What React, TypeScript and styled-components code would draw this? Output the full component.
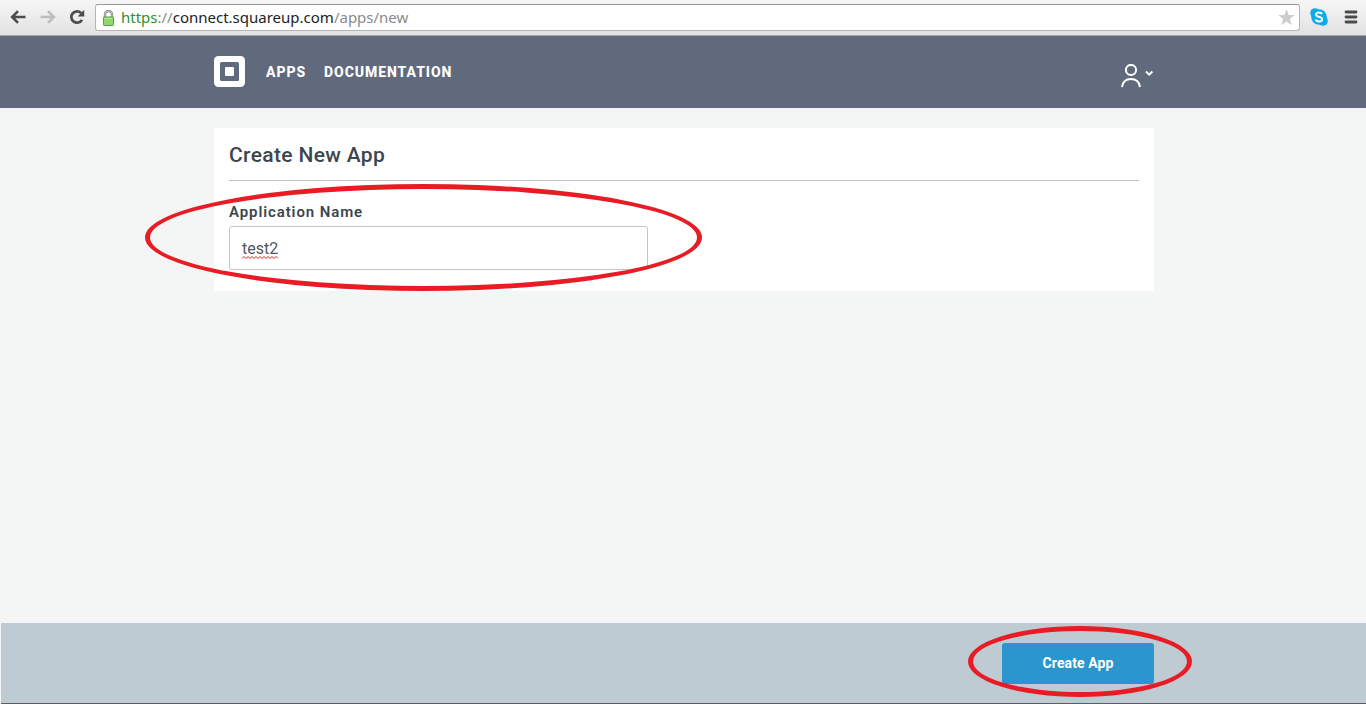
import React from 'react';
import styled, { createGlobalStyle } from 'styled-components';

const GlobalStyle = createGlobalStyle`
  *, *::before, *::after { box-sizing: border-box; }
  body { margin: 0; background: #f4f6f5; overflow: hidden; }
`;

const Page = styled.div`
  position: relative;
  display: flex;
  flex-direction: column;
  height: 704px;
  background: #f4f6f5;
  color: #3d454d;
  font-family: Roboto, "Liberation Sans", sans-serif;
`;

const BrowserBar = styled.div`
  display: flex;
  align-items: flex-start;
  height: 36px;
  padding: 4px 8px 0 10px;
  background: linear-gradient(#f6f6f6, #e2e2e2);
  border-bottom: 1px solid #a3a3a3;
`;

const BrowserButton = styled.div<{ $gap: number }>`
  display: flex;
  align-items: center;
  height: 26px;
  margin-right: ${({ $gap }) => $gap}px;
`;

const AddressBar = styled.div`
  display: flex;
  flex: 1;
  align-items: center;
  height: 27px;
  padding: 0 4px 0 6px;
  background: #fff;
  border: 1px solid #b5b5b5;
  border-top-color: #999;
  border-radius: 3px;
  margin-right: 10px;
`;

const Url = styled.span`
  flex: 1;
  margin-left: 6px;
  padding-bottom: 1px;
  font: 15px/24px "Noto Sans", sans-serif;
  color: #8a8a8a;
  white-space: nowrap;
`;

const Scheme = styled.span`
  color: #2f8f2f;
`;

const Host = styled.span`
  color: #222;
`;

const Header = styled.header`
  display: flex;
  justify-content: center;
  height: 72px;
  padding-left: 2px;
  background: #606a7c;
`;

const HeaderInner = styled.div`
  display: flex;
  align-items: center;
  width: 940px;
  padding-bottom: 1px;
`;

const Nav = styled.nav`
  display: flex;
  flex: 1;
  gap: 20px;
  margin-left: 21px;
`;

const NavLink = styled.a<{ $width: number }>`
  width: ${({ $width }) => $width}px;
  color: #fff;
  font-size: 14px;
  font-weight: 800;
  line-height: 16px;
  letter-spacing: 0.95px;
  white-space: nowrap;
`;

const Account = styled.div`
  display: flex;
  align-items: center;
  padding-top: 9px;
`;

const Main = styled.main`
  display: flex;
  flex: 1;
  justify-content: center;
  align-items: flex-start;
  padding: 20px 0 0 2px;
`;

const Card = styled.section`
  width: 940px;
  height: 163px;
  padding: 0 15px;
  background: #fff;
`;

const Title = styled.h1`
  height: 53px;
  margin: 0;
  border-bottom: 1px solid #c3c5c7;
  font-size: 21px;
  font-weight: 500;
  line-height: 54px;
  letter-spacing: 0.35px;
`;

const Label = styled.label`
  display: block;
  height: 45px;
  padding-top: 21px;
  font-size: 15px;
  font-weight: 600;
  line-height: 20px;
  letter-spacing: 0.9px;
`;

const Field = styled.div`
  display: flex;
  align-items: center;
  width: 419px;
  height: 44px;
  padding: 2px 12px 0;
  background: #fff;
  border: 1px solid #c3c5c7;
  border-radius: 3px;
  font-size: 16px;
  font-weight: 400;
  color: #50575e;
`;

const Misspelled = styled.span`
  display: flex;
  flex-direction: column;
  height: 15px;
  line-height: 14px;
`;

const Footer = styled.footer`
  display: flex;
  justify-content: center;
  height: 81px;
  margin-left: 1px;
  padding: 20px 0 0 1px;
  background: #bfcbd2;
  border-bottom: 1px solid #5b5d60;
`;

const FooterInner = styled.div`
  display: flex;
  justify-content: flex-end;
  width: 940px;
`;

const PrimaryButton = styled.button`
  width: 152px;
  height: 41px;
  padding: 0;
  color: #fff;
  background: #2b96ce;
  border: 0;
  border-radius: 3px;
  font: 700 14px/41px Roboto, sans-serif;
  letter-spacing: 0.1px;
`;

const Highlight = styled.div<{ $x: number; $y: number; $w: number; $h: number }>`
  position: absolute;
  left: ${({ $x }) => $x}px;
  top: ${({ $y }) => $y}px;
  width: ${({ $w }) => $w}px;
  height: ${({ $h }) => $h}px;
  border: 5px solid #e81c24;
  border-radius: 50%;
  pointer-events: none;
`;

const Arrow = ({ color, flip }: { color: string; flip?: boolean }) => (
  <svg width="16" height="14" viewBox="0 0 16 14" fill="none" stroke={color} strokeWidth="2.6">
    <path d={flip ? 'M0.5 7H13.5M8 1.2L13.8 7L8 12.8' : 'M15.5 7H2.5M8 1.2L2.2 7L8 12.8'} />
  </svg>
);

const Reload = () => (
  <svg width="16" height="16" viewBox="0 0 16 16">
    <path d="M12.2 4.1A5.7 5.7 0 1 0 13 10.8" fill="none" stroke="#4c4c4c" strokeWidth="2.7" />
    <path d="M15.2 0.8V7.4H8.6Z" fill="#4c4c4c" />
  </svg>
);

const Lock = () => (
  <svg width="13" height="16" viewBox="0 0 13 16">
    <path d="M3 8V4.5a3.5 3.5 0 0 1 7 0V8" fill="none" stroke="#858585" strokeWidth="2.4" />
    <path d="M3 8V4.5a3.5 3.5 0 0 1 7 0V8" fill="none" stroke="#d5d5d5" strokeWidth="0.8" />
    <rect x="1.5" y="7" width="10" height="8.5" rx="0.8" fill="#91d76b" stroke="#5b9d41" />
    <path d="M2.5 8.5h8" stroke="#b9ec9c" />
  </svg>
);

const Star = () => (
  <svg width="17" height="17" viewBox="0 0 17 17">
    <path d="M8.5 0.3L10.7 6H16.7L12 9.9L13.7 16.2L8.5 12.6L3.3 16.2L5 9.9L0.3 6H6.3Z" fill="#cdcdcd" />
  </svg>
);

const Skype = () => (
  <svg width="18" height="18" viewBox="0 0 18 18">
    <circle cx="9" cy="9" r="7.8" fill="#0aadeb" />
    <circle cx="5" cy="5" r="4.8" fill="#0aadeb" />
    <circle cx="13" cy="13" r="4.8" fill="#0aadeb" />
    <path d="M12 6.2C11.5 4.8 10.3 4.4 9 4.4C7.3 4.4 6.1 5.2 6.1 6.6C6.1 9.6 12.1 8.1 12.1 11.3C12.1 12.8 10.7 13.6 9 13.6C7.3 13.6 6 12.8 5.7 11.4" fill="none" stroke="#fff" strokeWidth="2" />
  </svg>
);

const MenuIcon = () => (
  <svg width="14" height="14" viewBox="0 0 14 14" stroke="#4b4b4b" strokeWidth="2.8" strokeLinecap="round">
    <path d="M2 2H12M2 7H12M2 12H12" />
  </svg>
);

const Logo = () => (
  <svg width="31" height="31" viewBox="0 0 31 31">
    <rect width="31" height="31" rx="4.5" fill="#fff" />
    <rect x="6" y="6" width="19" height="19" rx="1.5" fill="#606a7c" />
    <rect x="11" y="11" width="9" height="9" rx="1" fill="#fff" />
  </svg>
);

const Person = () => (
  <svg width="34" height="24" viewBox="0 0 34 24" fill="none" stroke="#fff" strokeWidth="2">
    <circle cx="11" cy="6" r="5.1" />
    <path d="M2 23C2.8 17.8 6.4 15 11 15S19.2 17.8 20 23" />
    <path d="M26 7.5L29.2 10.6L32.4 7.5" />
  </svg>
);

const SquiggleLine = styled.svg`
  display: block;
  flex-shrink: 0;
`;

const Squiggle = () => (
  <SquiggleLine width="36" height="3" viewBox="0 0 36 3">
    <path
      d={'M0 2.5' + Array.from({ length: 18 }, (_, i) => `L${i * 2 + 2} ${i % 2 ? 2.5 : 0.5}`).join('')}
      fill="none"
      stroke="#d92020"
      strokeWidth="1"
    />
  </SquiggleLine>
);

export default function App() {
  return (
    <Page>
      <GlobalStyle />
      <BrowserBar>
        <BrowserButton $gap={14}><Arrow color="#4c4c4c" /></BrowserButton>
        <BrowserButton $gap={13}><Arrow color="#bdbdbd" flip /></BrowserButton>
        <BrowserButton $gap={10}><Reload /></BrowserButton>
        <AddressBar>
          <Lock />
          <Url><Scheme>https</Scheme>://<Host>connect.squareup.com</Host>/apps/new</Url>
          <Star />
        </AddressBar>
        <BrowserButton $gap={16}><Skype /></BrowserButton>
        <BrowserButton $gap={0}><MenuIcon /></BrowserButton>
      </BrowserBar>
      <Header>
        <HeaderInner>
          <Logo />
          <Nav>
            <NavLink $width={38}>APPS</NavLink>
            <NavLink $width={130}>DOCUMENTATION</NavLink>
          </Nav>
          <Account><Person /></Account>
        </HeaderInner>
      </Header>
      <Main>
        <Card>
          <Title>Create New App</Title>
          <Label>Application Name</Label>
          <Field>
            <Misspelled>test2<Squiggle /></Misspelled>
          </Field>
        </Card>
      </Main>
      <Footer>
        <FooterInner>
          <PrimaryButton>Create App</PrimaryButton>
        </FooterInner>
      </Footer>
      <Highlight $x={145} $y={184} $w={557} $h={107} />
      <Highlight $x={968} $y={626} $w={224} $h={71} />
    </Page>
  );
}
